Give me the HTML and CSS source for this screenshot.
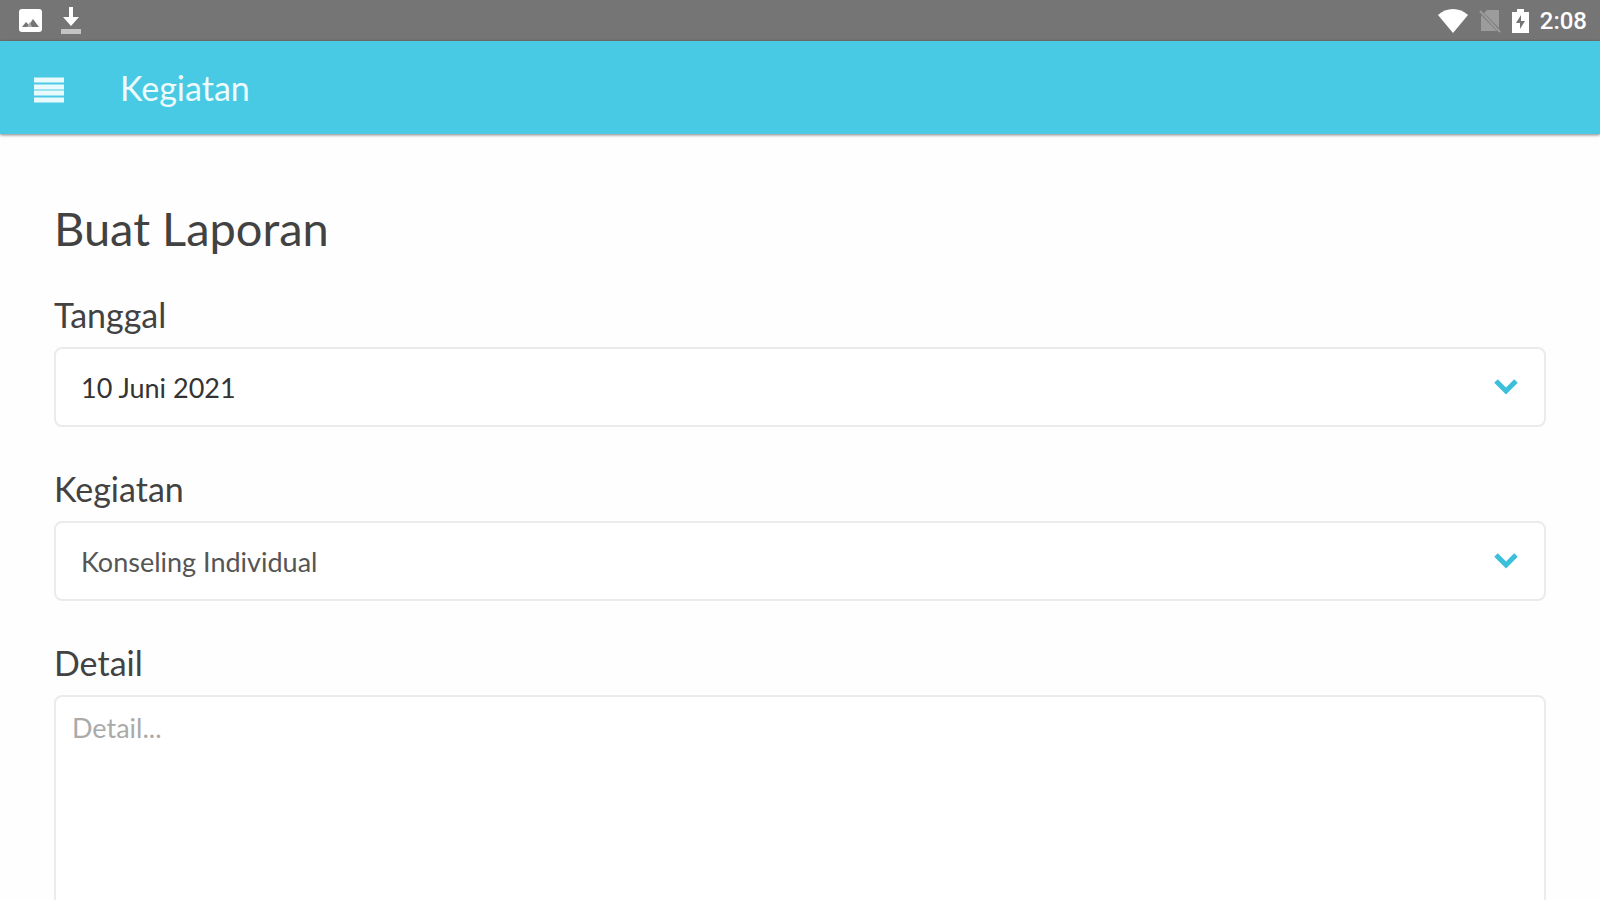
FILE: index.html
```html
<!DOCTYPE html>
<html lang="id">
  <head>
    <meta charset="UTF-8" />
    <meta name="viewport" content="width=device-width, initial-scale=1" />
    <title>Kegiatan</title>
    <link rel="stylesheet" href="styles.css">
  </head>
  <body>
    <div class="app">
      <!-- Status bar -->
      <div class="status-bar">
        <div class="status-left">
          <svg width="23" height="23" viewBox="0 0 23 23">
            <rect width="23" height="23" rx="3" fill="#fff" />
            <path d="M3 18l4-5 3 3 4-6 6 8z" fill="#757575" />
            <path d="M8 18l3-5 2 5z" fill="#aaa" />
          </svg>
          <svg width="20" height="27" viewBox="0 0 20 27">
            <path d="M8 0h4v10h6l-8 9-8-9h6z" fill="#fff" />
            <rect y="22" width="20" height="5" fill="#c4c4c4" />
          </svg>
        </div>
        <div class="status-right">
          <svg width="30" height="24" viewBox="0 0 30 24">
            <path d="M0 6C8-2 22-2 30 6L15 24z" fill="#fff" />
          </svg>
          <svg width="22" height="24" viewBox="0 0 22 24">
            <path d="M8 1h12v18L5 4zM2 6l16 16H2z" fill="#9c9c9c" />
            <path d="M1 2l20 21" stroke="#9c9c9c" stroke-width="2" />
          </svg>
          <svg width="17" height="24" viewBox="0 0 17 24">
            <path d="M5 0h7v3h5v21H0V3h5z" fill="#fff" />
            <path d="M9 6L4 14h4v6l5-8H9z" fill="#757575" />
          </svg>
          <span class="clock">2:08</span>
        </div>
      </div>

      <!-- Header -->
      <header class="header">
        <button type="button" class="menu-btn" aria-label="Menu">
          <svg width="30" height="26" viewBox="0 0 30 26">
            <path d="M0 3h30M0 10h30M0 16h30M0 23h30" stroke="#e9fafd" stroke-width="5" />
          </svg>
        </button>
        <span class="header-title">Kegiatan</span>
      </header>

      <main class="content">
        <h1>Buat Laporan</h1>
        <form id="laporanForm">
          <div class="form-group">
            <label for="tanggal">Tanggal</label>
            <div class="select-box">
              <select id="tanggal" name="tanggal" class="date">
                <option>10 Juni 2021</option>
              </select>
              <svg class="chevron" width="24" height="16" viewBox="0 0 24 16">
                <path d="M2 2l10 10 10-10" />
              </svg>
            </div>
          </div>

          <div class="form-group">
            <label for="kegiatan">Kegiatan</label>
            <div class="select-box">
              <select id="kegiatan" name="kegiatan">
                <option>Konseling Individual</option>
              </select>
              <svg class="chevron" width="24" height="16" viewBox="0 0 24 16">
                <path d="M2 2l10 10 10-10" />
              </svg>
            </div>
          </div>

          <div class="form-group">
            <label for="detail">Detail</label>
            <textarea id="detail" name="detail" placeholder="Detail..."></textarea>
          </div>
        </form>
      </main>
    </div>
  </body>
</html>
```
FILE: styles.css
```css
* {
  box-sizing: border-box;
}
body {
  margin: 0;
  font-family: Lato, sans-serif;
  color: #424242;
  background: #fefefe;
}
.app {
  display: flex;
  flex-direction: column;
  height: 100vh;
}

/* Status bar */
.status-bar {
  display: flex;
  flex-shrink: 0;
  justify-content: space-between;
  align-items: center;
  height: 41px;
  padding: 0 13px 0 19px;
  background: #757575;
}
.status-left,
.status-right {
  display: flex;
  align-items: center;
}
.status-left {
  gap: 19px;
}
.status-right {
  gap: 11px;
}
.clock {
  font: 500 24px/28px Roboto, sans-serif;
  color: #fff;
}

/* Header */
.header {
  display: flex;
  flex-shrink: 0;
  align-items: center;
  gap: 56px;
  height: 93px;
  padding: 0 34px;
  background: #48cae4;
  box-shadow: 0 1px 3px rgba(0, 0, 0, 0.5);
  z-index: 1;
}
.menu-btn {
  display: flex;
  padding: 4px 0 0;
  border: none;
  background: none;
}
.header-title {
  font-size: 34px;
  line-height: 40px;
  color: #eefbfd;
}

/* Form */
.content {
  flex: 1;
  overflow-y: auto;
  scrollbar-width: none;
  padding: 64px 54px;
}
h1 {
  margin: 0 0 35px;
  font-size: 47px;
  font-weight: 400;
  line-height: 60px;
}
.form-group {
  margin-bottom: 40px;
}
label {
  display: block;
  margin-bottom: 10px;
  font-size: 34px;
  line-height: 44px;
}
select,
textarea {
  display: block;
  width: 100%;
  border: 2px solid #ebebeb;
  border-radius: 8px;
  background: #fff;
  font-family: inherit;
  font-size: 27px;
  outline: none;
}
.select-box {
  position: relative;
}
select {
  height: 80px;
  padding: 0 72px 0 25px;
  appearance: none;
  color: #555;
}
select.date {
  color: #333;
}
.chevron {
  position: absolute;
  top: 32px;
  right: 28px;
  pointer-events: none;
  fill: none;
  stroke: #3bbfdb;
  stroke-width: 5;
}
textarea {
  height: 320px;
  padding: 14px 16px;
  line-height: 34px;
  resize: none;
}
textarea::placeholder {
  color: #aaa;
}
```
